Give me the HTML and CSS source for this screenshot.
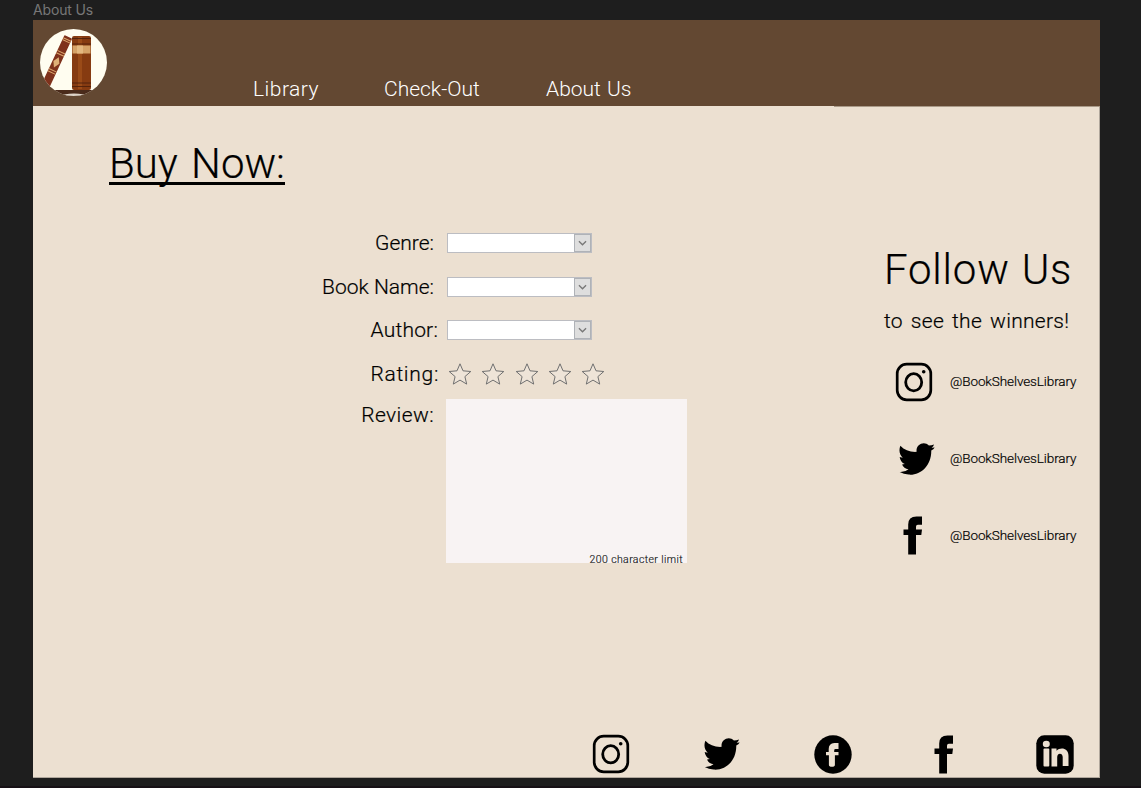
FILE: index.html
```html
<!DOCTYPE html>
<html lang="en">
<head>
<meta charset="utf-8">
<title>About Us</title>
<link rel="stylesheet" href="styles.css">
</head>
<body>
<svg class="defs" width="0" height="0" aria-hidden="true">
  <symbol id="instagram" viewBox="0 0 38 40">
    <rect x="2.2" y="2.2" width="33.6" height="35.6" rx="9.5" fill="none" stroke="#000" stroke-width="2.7"/>
    <ellipse cx="18.7" cy="20.3" rx="8" ry="8.6" fill="none" stroke="#000" stroke-width="2.8"/>
    <circle cx="28.7" cy="9.8" r="1.8"/>
  </symbol>
  <symbol id="twitter" viewBox="0 0 106 94">
    <path d="M4 8C16 21 32 27 52 26C48 4 74-8 88 7Q96 7 103 4Q102 10 96 14L105 13Q102 19 95 22C96 66 64 96 28 93Q14 92 2 85Q18 86 28 77Q14 75 9 63L17 62Q4 56 2 41L11 43C1 34-1 20 4 8z"/>
  </symbol>
  <symbol id="facebook" viewBox="0 0 20 39">
    <path d="M19 .5v8.3h-4.200q-1.800 0-1.800 2v2.800h6l-.7 5.400H13v19.500H5.200V19H.500v-5.400h4.700V8.500Q5.200.500 13.500.500z"/>
  </symbol>
  <symbol id="star" viewBox="0 0 24 24">
    <path d="M12 1.800l3 7 7.800.7-5.900 5.100 1.800 7.500L12 18.100l-6.700 4 1.800-7.500-5.900-5.100 7.800-.7z" fill="#eee4d8" stroke="#707070" stroke-width="1"/>
  </symbol>
</svg>

<div class="frame-name">About Us</div>
<main class="frame">
  <header class="header">
    <svg class="logo" viewBox="0 0 67 67">
      <clipPath id="disc"><circle cx="33.500" cy="33.500" r="33.500"/></clipPath>
      <g clip-path="url(#disc)">
        <path fill="#fffdf0" d="M0 0h67v67H0z"/>
        <path fill="#4a2b1b" d="M13 61h54v6H13z"/>
        <ellipse cx="34" cy="67" rx="12" ry="2.500" fill="#ddd4c9"/>
        <g transform="translate(24.500 6) rotate(25)">
          <rect width="8.500" height="56" rx="1" fill="#7f321c"/>
          <path d="M0 3h8.500M0 5h8.500M0 17h8.500M0 19.500h8.500M0 37h8.500M0 39.500h8.500" stroke="#dca66c" stroke-width="1"/>
          <path d="M4.200 22.500l3.300 5.700-3.300 5.800-3.300-5.800z" fill="#dfb077"/>
        </g>
        <rect x="32" y="7" width="19" height="54" rx="2" fill="#863b11"/>
        <path d="M38 8h4v52h-4z" fill="#9a4b18"/>
        <path d="M32 9.500h19M32 15h19M32 54h19M32 57.500h19" stroke="#4f200b" stroke-width=".9"/>
        <path fill="#d5a267" d="M32.500 16.500h18v8h-18z"/>
        <path fill="#e3b880" d="M37 16.500h6v8h-6z"/>
      </g>
    </svg>
    <nav class="nav">
      <a class="nav-library">Library</a>
      <a class="nav-checkout">Check-Out</a>
      <a class="nav-about">About Us</a>
    </nav>
  </header>

  <div class="content">
    <section class="main-column">
      <h1 class="title">Buy Now:</h1>
      <form class="form">
        <label class="label genre">Genre:</label>
        <div class="select"><span class="select-button"><svg viewBox="0 0 16 18"><path d="M4 7l4 4 4-4"/></svg></span></div>
        <label class="label book-name">Book Name:</label>
        <div class="select"><span class="select-button"><svg viewBox="0 0 16 18"><path d="M4 7l4 4 4-4"/></svg></span></div>
        <label class="label author">Author:</label>
        <div class="select"><span class="select-button"><svg viewBox="0 0 16 18"><path d="M4 7l4 4 4-4"/></svg></span></div>
        <label class="label rating">Rating:</label>
        <div class="stars">
          <svg><use href="#star"/></svg><svg><use href="#star"/></svg><svg><use href="#star"/></svg><svg><use href="#star"/></svg><svg><use href="#star"/></svg>
        </div>
        <label class="label review">Review:</label>
        <div class="review-box"><span class="limit">200 character limit</span></div>
      </form>
    </section>
    <aside class="follow">
      <h2 class="follow-title">Follow Us</h2>
      <p class="follow-text">to see the winners!</p>
      <ul class="accounts">
        <li><svg class="instagram"><use href="#instagram"/></svg><span>@BookShelvesLibrary</span></li>
        <li><svg class="twitter"><use href="#twitter"/></svg><span>@BookShelvesLibrary</span></li>
        <li><svg class="facebook"><use href="#facebook"/></svg><span>@BookShelvesLibrary</span></li>
      </ul>
    </aside>
  </div>

  <footer class="footer">
    <span><svg class="instagram"><use href="#instagram"/></svg></span>
    <span><svg class="twitter"><use href="#twitter"/></svg></span>
    <span><svg class="disc" viewBox="0 0 38 39"><ellipse cx="19" cy="19.500" rx="18.700" ry="19.200"/><path fill="#ece0d1" d="M24.500 8v6h-3q-1.300 0-1.300 1.400v1.500h4.300v3.400h-3.600v9.500q0 2-3 2t-3-2v-9.500H12v-3.400h2.700V14q0-5.500 5.700-6z"/></svg></span>
    <span><svg class="facebook"><use href="#facebook"/></svg></span>
    <span><svg class="linkedin" viewBox="0 0 38 39"><rect x=".3" y=".3" width="37.400" height="38.400" rx="8"/><g fill="#ece0d1"><ellipse cx="10.300" cy="9" rx="3.500" ry="3.300"/><rect x="7.500" y="13.500" width="5.800" height="18" rx="1"/><path d="M15.500 13.500h5v2.200c3.500-3.800 12-3.200 12 5v10.300h-5.800V22c0-4.500-5.500-4.500-5.500 0v9.500h-5.700z"/></g></svg></span>
  </footer>
</main>
</body>
</html>
```
FILE: styles.css
```css
* { box-sizing: border-box; }

body {
  margin: 0;
  height: 788px;
  padding-left: 33px;
  overflow: hidden;
  background: #1e1e1e;
  border-bottom: 2px solid #171116;
  color: #000;
  font-family: Roboto, "Liberation Sans", sans-serif;
  font-weight: 300;
  white-space: nowrap;
}

svg { display: block; flex: none; }
.defs { display: none; }

.frame-name {
  height: 20px;
  color: #777;
  font: 400 14px/20px Inter, sans-serif;
  letter-spacing: -0.15px;
}

.frame {
  display: flex;
  flex-direction: column;
  width: 1067px;
  height: 758px;
  background: #ece0d1;
  box-shadow: inset -1px -1px #b0a79c;
  -webkit-text-stroke: 0.2px;
}

.header {
  display: flex;
  height: 86px;
  padding: 9px 0 0 7px;
  background: #634832;
  color: #fff;
}

.logo { width: 67px; height: 67px; }

.nav {
  display: flex;
  padding: 46px 0 0 146px;
  font-size: 21px;
  line-height: 28px;
  -webkit-text-stroke: 0;
}

.nav-library { width: 131px; letter-spacing: 0.5px; }
.nav-checkout { width: 162px; }
.nav-about { word-spacing: 1px; }

.content {
  display: grid;
  grid-template-columns: 851px 1fr;
  height: 628px;
  background: linear-gradient(#aa9a88, #aa9a88) right top / 266px 1px no-repeat;
}

.title {
  width: max-content;
  margin: 32px 0 0 76px;
  border-bottom: 3px solid #000;
  font-size: 42px;
  font-weight: 300;
  line-height: 51px;
  height: 47px;
  word-spacing: 3px;
}

.form {
  display: grid;
  grid-template-columns: 401px 241px;
  grid-template-rows: 43.7px 43.7px 43.7px 46.9px 164.5px;
  column-gap: 12px;
  margin-top: 36px;
}

.label {
  justify-self: end;
  padding-top: 8px;
  font-size: 21px;
  line-height: 28px;
}

.author { margin-right: -4px; letter-spacing: 0.2px; }
.rating { margin-right: -5px; letter-spacing: 0.7px; }
.review { padding-top: 2px; letter-spacing: 0.4px; }

.select {
  display: flex;
  justify-content: flex-end;
  width: 145px;
  height: 20px;
  margin: 12px 0 0 1px;
  background: #fff;
  border: 1px solid #bcbdc2;
}

.select-button {
  width: 17px;
  height: 18px;
  background: #dedede;
  border: 1px solid #afb2b7;
}

.select-button svg {
  width: 15px;
  height: 16px;
  fill: none;
  stroke: #777;
  stroke-width: 1.5;
}

.stars { display: flex; gap: 9.200px; padding: 10px 0 0 2.3px; }
.stars svg { width: 24px; height: 24px; }

.review-box {
  display: flex;
  align-items: flex-end;
  justify-content: flex-end;
  padding-right: 4px;
  background: #f8f3f3;
}

.limit {
  font-size: 10.500px;
  line-height: 7px;
  letter-spacing: 0.4px;
  color: #222;
}

.follow-title {
  margin: 137px 0 0;
  font-size: 42px;
  font-weight: 300;
  line-height: 54px;
  letter-spacing: 0.8px;
  word-spacing: 1px;
}

.follow-text {
  margin: 10px 0 0;
  font-size: 21px;
  line-height: 28px;
  letter-spacing: 0.3px;
  word-spacing: 2.5px;
}

.accounts { margin: 8px 0 0; padding: 0; list-style: none; }
.accounts li {
  display: grid;
  grid-template-columns: 66px 1fr;
  align-items: center;
  height: 77px;
  font-size: 13.500px;
  letter-spacing: -0.1px;
}
.accounts span { padding-bottom: 2px; }

.instagram { width: 38px; height: 40px; }
.twitter { width: 36px; height: 32px; }
.facebook { width: 20px; height: 39px; }
.disc, .linkedin { width: 38px; height: 39px; }
.accounts .instagram { margin-left: 11px; }
.accounts .twitter { margin-left: 15px; }
.accounts .facebook { margin-left: 19px; }

.footer {
  display: grid;
  grid-template-columns: repeat(5, 111px);
  justify-items: center;
  align-items: center;
  height: 38px;
  padding-left: 522px;
}
```
